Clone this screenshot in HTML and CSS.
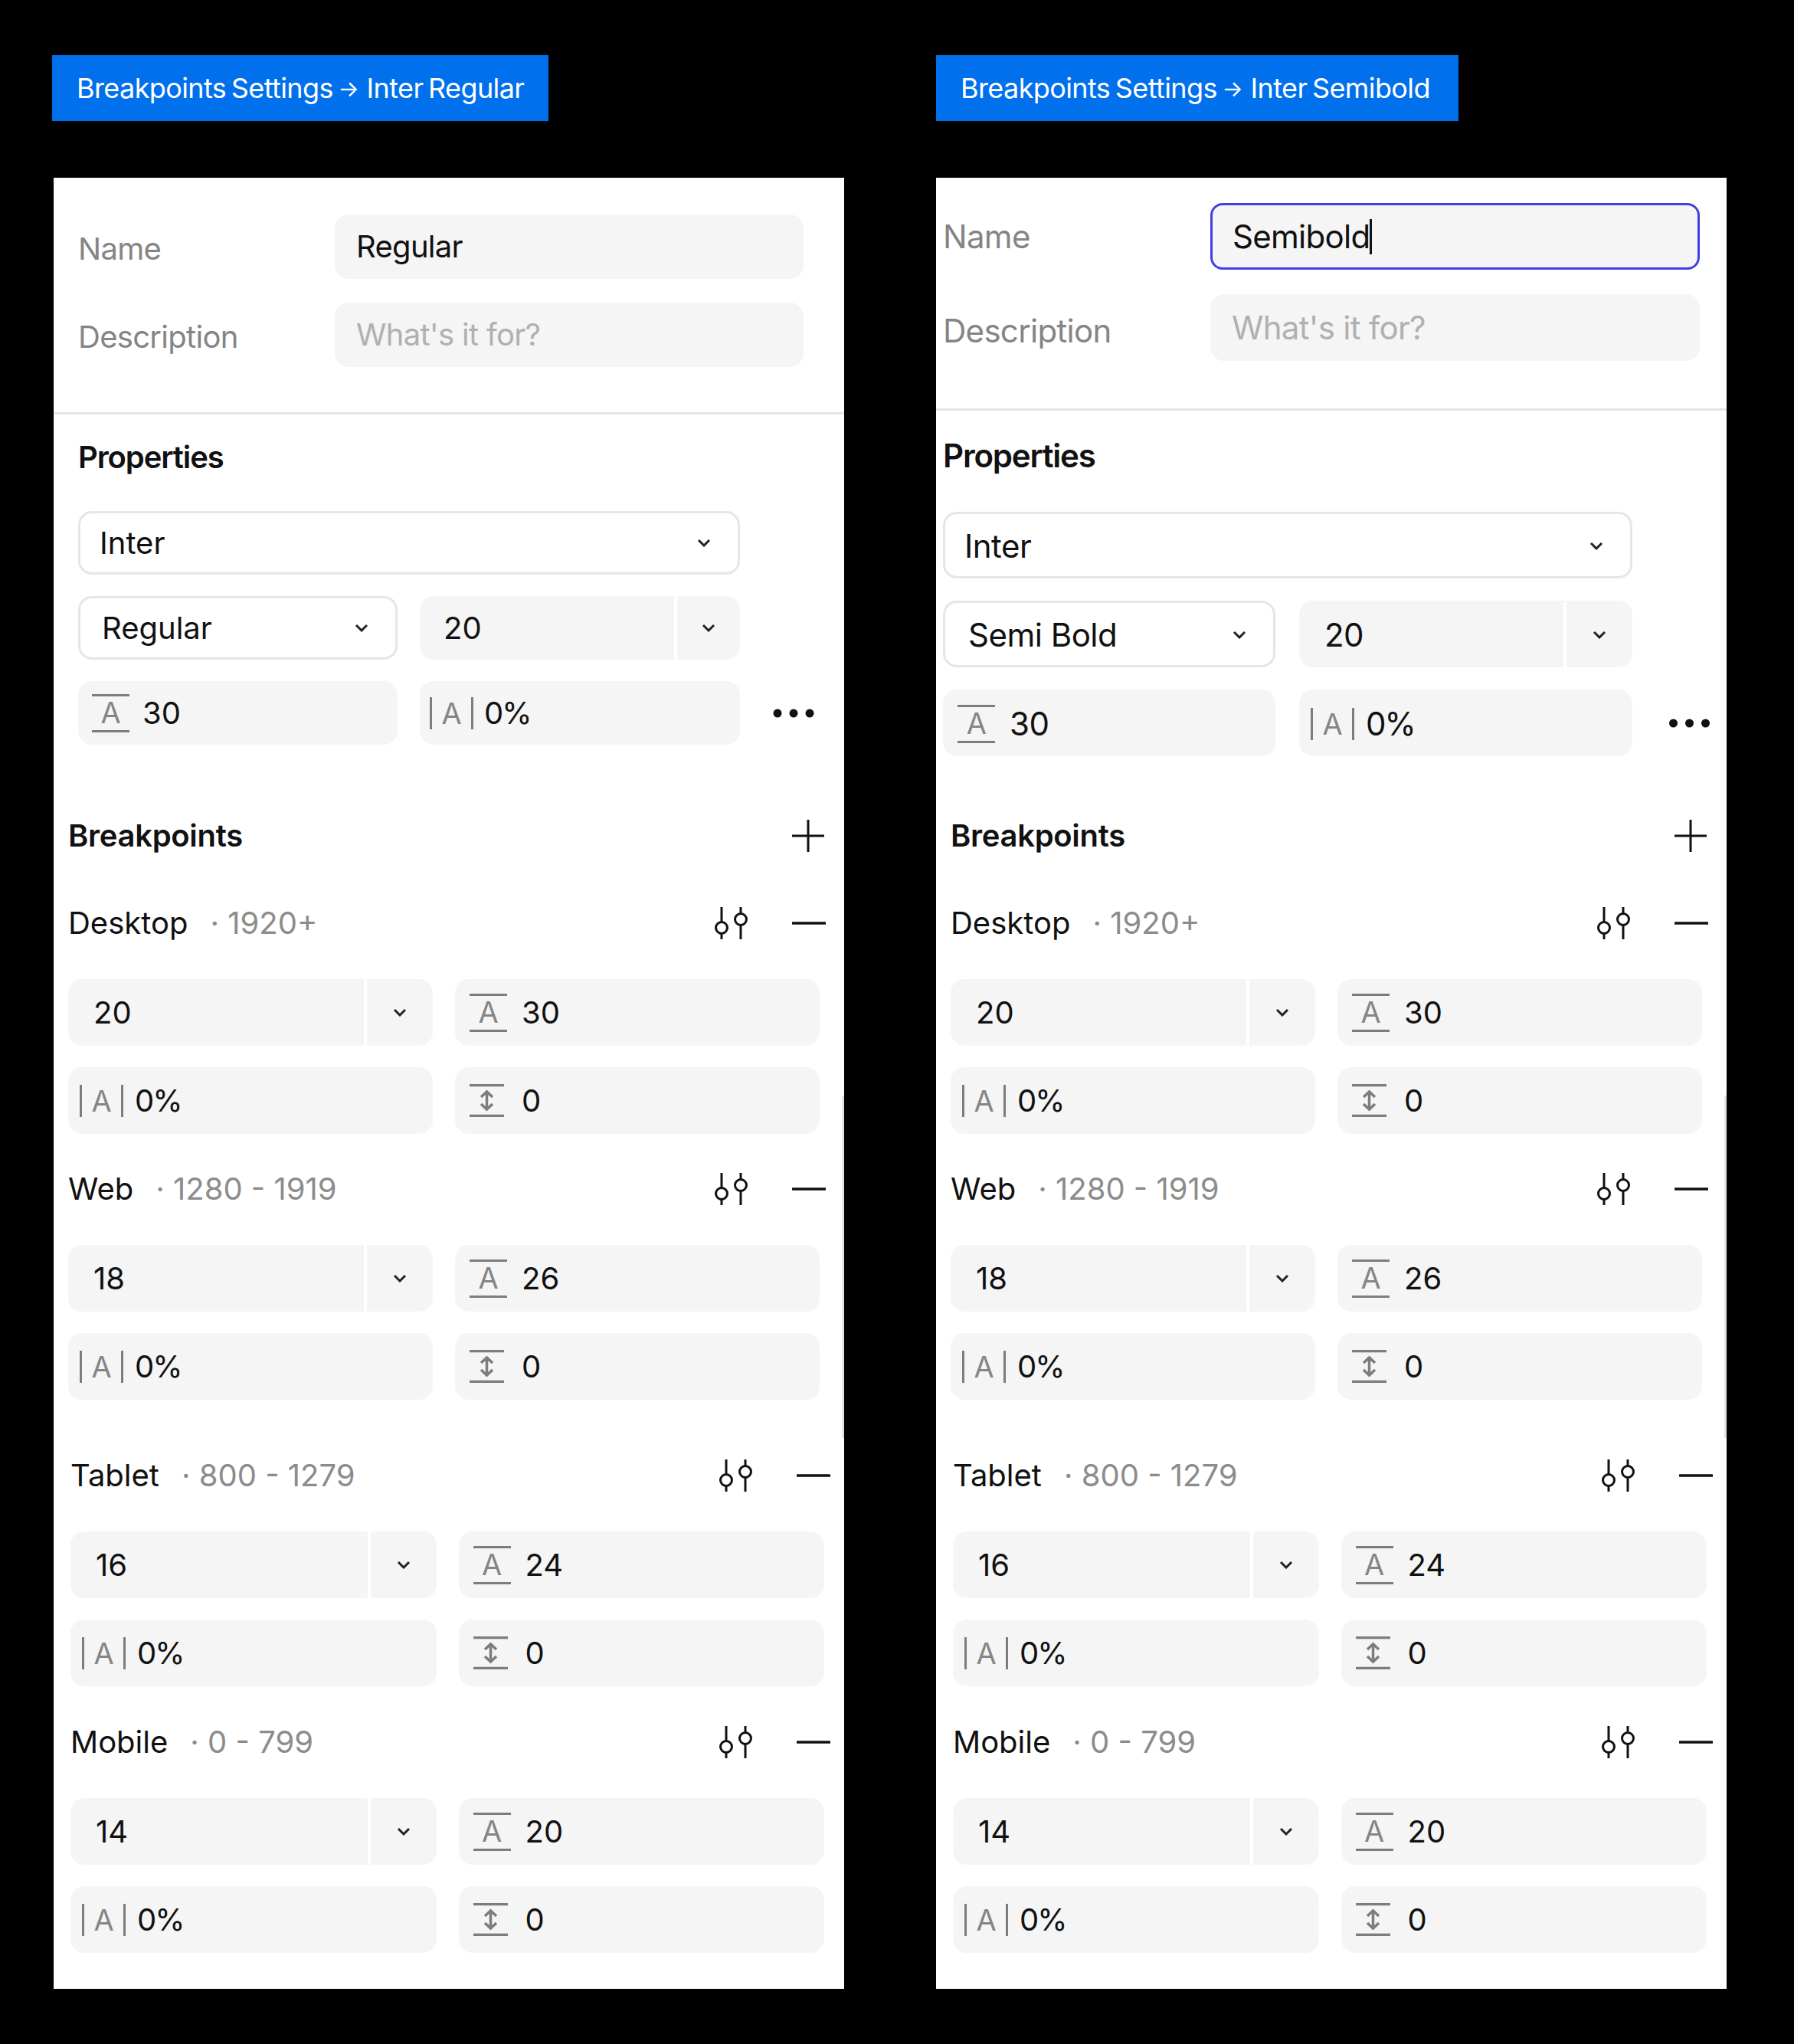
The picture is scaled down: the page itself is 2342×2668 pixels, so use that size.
FILE: index.html
```html
<!DOCTYPE html>
<html>
<head>
    <link rel="stylesheet" href="styles.css">
</head>
<body>
    <svg class="defs">
        <symbol id="chev" viewBox="0 0 18 11"><path d="M2 2 9 9 16 2" fill="none" stroke="#222" stroke-width="3"/></symbol>
        <symbol id="dots" viewBox="0 0 54 12"><circle cx="6" cy="6" r="5.5"/><circle cx="27" cy="6" r="5.5"/><circle cx="48" cy="6" r="5.5"/></symbol>
        <symbol id="plus" viewBox="0 0 42 42"><path d="M21 0V42M0 21H42" stroke="#111" stroke-width="3"/></symbol>
        <symbol id="minus" viewBox="0 0 44 6"><path d="M1 3H43" stroke="#111" stroke-width="3.5" stroke-linecap="round"/></symbol>
        <symbol id="sliders" viewBox="0 0 44 42">
            <path d="M9 0V42M34 0V42" stroke="#111" stroke-width="3"/>
            <circle cx="9" cy="27" r="7.5" fill="#fff" stroke="#111" stroke-width="3"/>
            <circle cx="34" cy="16" r="7.5" fill="#fff" stroke="#111" stroke-width="3"/>
        </symbol>
        <symbol id="spacing" viewBox="0 0 45 43">
            <path d="M0 1.5H45M0 41.5H45" stroke="#7d7d7d" stroke-width="3.5" fill="none"/>
            <path d="M22.5 11V32M15 17 22.5 10 30 17M15 26 22.5 33 30 26" stroke="#7d7d7d" stroke-width="3.5" fill="none"/>
        </symbol>
    </svg>

    <div class="board">
        <div class="column">
            <div class="tag tag-a">Breakpoints Settings <span class="arrow">→</span> Inter Regular</div>
            <div class="panel">
                <div class="scroll-thumb"></div>
                <div class="name-form form-a">
                    <div class="form-label">Name</div>
                    <div class="input">Regular</div>
                    <div class="form-label">Description</div>
                    <div class="input placeholder">What's it for?</div>
                </div>
                <div class="props props-a">
                    <div class="props-title">Properties</div>
                    <div class="props-grid">
                        <div class="select wide"><span>Inter</span><svg class="chev"><use href="#chev"/></svg></div>
                        <div class="select"><span>Regular</span><svg class="chev"><use href="#chev"/></svg></div>
                        <div class="field"><span class="num">20</span><span class="drop"><svg class="chev"><use href="#chev"/></svg></span></div>
                        <div class="field with-lh"><span class="ic-lh">A</span>30</div>
                        <div class="field with-track"><span class="ic-track">A</span>0%</div>
                        <svg class="more"><use href="#dots"/></svg>
                    </div>
                </div>
                <div class="bp">
                    <div class="bp-title"><span>Breakpoints</span><svg class="plus"><use href="#plus"/></svg></div>

                    <div class="bp-group">
                        <div class="bp-row"><span>Desktop</span><span class="range">· 1920+</span><svg class="sliders"><use href="#sliders"/></svg><svg class="minus"><use href="#minus"/></svg></div>
                        <div class="bp-fields">
                            <div class="field"><span class="num">20</span><span class="drop"><svg class="chev"><use href="#chev"/></svg></span></div>
                            <div class="field with-lh"><span class="ic-lh">A</span>30</div>
                            <div class="field with-track"><span class="ic-track">A</span>0%</div>
                            <div class="field with-sp"><svg class="ic-sp"><use href="#spacing"/></svg>0</div>
                        </div>
                    </div>

                    <div class="bp-group">
                        <div class="bp-row"><span>Web</span><span class="range">· 1280 - 1919</span><svg class="sliders"><use href="#sliders"/></svg><svg class="minus"><use href="#minus"/></svg></div>
                        <div class="bp-fields">
                            <div class="field"><span class="num">18</span><span class="drop"><svg class="chev"><use href="#chev"/></svg></span></div>
                            <div class="field with-lh"><span class="ic-lh">A</span>26</div>
                            <div class="field with-track"><span class="ic-track">A</span>0%</div>
                            <div class="field with-sp"><svg class="ic-sp"><use href="#spacing"/></svg>0</div>
                        </div>
                    </div>

                    <div class="bp-group shifted">
                        <div class="bp-row"><span>Tablet</span><span class="range">· 800 - 1279</span><svg class="sliders"><use href="#sliders"/></svg><svg class="minus"><use href="#minus"/></svg></div>
                        <div class="bp-fields">
                            <div class="field"><span class="num">16</span><span class="drop"><svg class="chev"><use href="#chev"/></svg></span></div>
                            <div class="field with-lh"><span class="ic-lh">A</span>24</div>
                            <div class="field with-track"><span class="ic-track">A</span>0%</div>
                            <div class="field with-sp"><svg class="ic-sp"><use href="#spacing"/></svg>0</div>
                        </div>
                    </div>

                    <div class="bp-group shifted">
                        <div class="bp-row"><span>Mobile</span><span class="range">· 0 - 799</span><svg class="sliders"><use href="#sliders"/></svg><svg class="minus"><use href="#minus"/></svg></div>
                        <div class="bp-fields">
                            <div class="field"><span class="num">14</span><span class="drop"><svg class="chev"><use href="#chev"/></svg></span></div>
                            <div class="field with-lh"><span class="ic-lh">A</span>20</div>
                            <div class="field with-track"><span class="ic-track">A</span>0%</div>
                            <div class="field with-sp"><svg class="ic-sp"><use href="#spacing"/></svg>0</div>
                        </div>
                    </div>
                </div>
            </div>
        </div>

        <div class="column">
            <div class="tag tag-b">Breakpoints Settings <span class="arrow">→</span> Inter Semibold</div>
            <div class="panel">
                <div class="scroll-thumb"></div>
                <div class="name-form form-b">
                    <div class="form-label">Name</div>
                    <div class="input focused">Semibold<span class="caret"></span></div>
                    <div class="form-label">Description</div>
                    <div class="input placeholder">What's it for?</div>
                </div>
                <div class="props props-b">
                    <div class="props-title">Properties</div>
                    <div class="props-grid">
                        <div class="select wide"><span>Inter</span><svg class="chev"><use href="#chev"/></svg></div>
                        <div class="select"><span>Semi Bold</span><svg class="chev"><use href="#chev"/></svg></div>
                        <div class="field"><span class="num">20</span><span class="drop"><svg class="chev"><use href="#chev"/></svg></span></div>
                        <div class="field with-lh"><span class="ic-lh">A</span>30</div>
                        <div class="field with-track"><span class="ic-track">A</span>0%</div>
                        <svg class="more"><use href="#dots"/></svg>
                    </div>
                </div>
                <div class="bp">
                    <div class="bp-title"><span>Breakpoints</span><svg class="plus"><use href="#plus"/></svg></div>

                    <div class="bp-group">
                        <div class="bp-row"><span>Desktop</span><span class="range">· 1920+</span><svg class="sliders"><use href="#sliders"/></svg><svg class="minus"><use href="#minus"/></svg></div>
                        <div class="bp-fields">
                            <div class="field"><span class="num">20</span><span class="drop"><svg class="chev"><use href="#chev"/></svg></span></div>
                            <div class="field with-lh"><span class="ic-lh">A</span>30</div>
                            <div class="field with-track"><span class="ic-track">A</span>0%</div>
                            <div class="field with-sp"><svg class="ic-sp"><use href="#spacing"/></svg>0</div>
                        </div>
                    </div>

                    <div class="bp-group">
                        <div class="bp-row"><span>Web</span><span class="range">· 1280 - 1919</span><svg class="sliders"><use href="#sliders"/></svg><svg class="minus"><use href="#minus"/></svg></div>
                        <div class="bp-fields">
                            <div class="field"><span class="num">18</span><span class="drop"><svg class="chev"><use href="#chev"/></svg></span></div>
                            <div class="field with-lh"><span class="ic-lh">A</span>26</div>
                            <div class="field with-track"><span class="ic-track">A</span>0%</div>
                            <div class="field with-sp"><svg class="ic-sp"><use href="#spacing"/></svg>0</div>
                        </div>
                    </div>

                    <div class="bp-group shifted">
                        <div class="bp-row"><span>Tablet</span><span class="range">· 800 - 1279</span><svg class="sliders"><use href="#sliders"/></svg><svg class="minus"><use href="#minus"/></svg></div>
                        <div class="bp-fields">
                            <div class="field"><span class="num">16</span><span class="drop"><svg class="chev"><use href="#chev"/></svg></span></div>
                            <div class="field with-lh"><span class="ic-lh">A</span>24</div>
                            <div class="field with-track"><span class="ic-track">A</span>0%</div>
                            <div class="field with-sp"><svg class="ic-sp"><use href="#spacing"/></svg>0</div>
                        </div>
                    </div>

                    <div class="bp-group shifted">
                        <div class="bp-row"><span>Mobile</span><span class="range">· 0 - 799</span><svg class="sliders"><use href="#sliders"/></svg><svg class="minus"><use href="#minus"/></svg></div>
                        <div class="bp-fields">
                            <div class="field"><span class="num">14</span><span class="drop"><svg class="chev"><use href="#chev"/></svg></span></div>
                            <div class="field with-lh"><span class="ic-lh">A</span>20</div>
                            <div class="field with-track"><span class="ic-track">A</span>0%</div>
                            <div class="field with-sp"><svg class="ic-sp"><use href="#spacing"/></svg>0</div>
                        </div>
                    </div>
                </div>
            </div>
        </div>
    </div>
</body>
</html>
```

FILE: styles.css
```css
body {
    margin: 0;
    background: #000;
    font-family: Inter, "Noto Sans", sans-serif;
    color: #111;
}
.defs {
    display: none;
}
.board {
    display: flex;
    gap: 120px;
    padding: 72px 0 72px 70px;
}
.column {
    width: 1032px;
}

/* blue caption above each panel */
.tag {
    box-sizing: border-box;
    height: 86px;
    margin-bottom: 74px;
    padding-left: 32px;
    display: flex;
    align-items: center;
    background: #0070ec;
    color: #fff;
    font-size: 36px;
    letter-spacing: -0.6px;
    word-spacing: -3px;
    white-space: pre;
}
.arrow {
    font-size: 29px;
    letter-spacing: 0;
    margin-right: 3px;
}
.tag-a {
    width: 648px;
    margin-left: -2px;
    padding-left: 32px;
}
.tag-b {
    width: 682px;
    padding-left: 32px;
}

.panel {
    position: relative;
    background: #fff;
    height: 2364px;
    font-size: 40px;
    line-height: 48px;
}
.scroll-thumb {
    position: absolute;
    right: 0;
    top: 1198px;
    width: 3px;
    height: 447px;
    background: #e4e4e4;
}

/* name + description */
.name-form {
    display: grid;
    align-items: center;
    border-bottom: 3px solid #e6e6e6;
    letter-spacing: -0.7px;
}
.form-a {
    grid-template-columns: 335px 612px;
    grid-auto-rows: 84px;
    row-gap: 31px;
    padding: 48px 0 59px 32px;
}
.form-b {
    grid-template-columns: 349px 639px;
    grid-auto-rows: 87px;
    row-gap: 32px;
    padding: 33px 0 62px 9px;
    font-size: 42px;
}
.form-label {
    color: #858585;
    padding-top: 6px;
}
.form-b .form-label {
    padding-top: 8px;
}
.form-b .form-label:first-child {
    padding-top: 0;
}
.input {
    box-sizing: border-box;
    height: 100%;
    display: flex;
    align-items: center;
    padding-left: 28px;
    background: #f5f5f5;
    border-radius: 18px;
}
.placeholder {
    color: #b0b0b0;
}
.focused {
    border: 3.5px solid #3f3fe6;
    border-radius: 16px;
    padding-left: 26px;
}
.caret {
    display: inline-block;
    width: 3px;
    height: 46px;
    margin-left: -1px;
    background: #111;
}

/* properties */
.props-title {
    font-weight: 600;
    letter-spacing: -1.1px;
}
.props-a {
    padding: 32px 0 95px 32px;
}
.props-a .props-title {
    margin-bottom: 46px;
}
.props-a .props-grid {
    grid-template-columns: 417px 418px 68px;
    grid-auto-rows: 83px;
    gap: 28px 29px;
}
.props-b {
    padding: 34px 0 79px 9px;
    font-size: 42px;
    line-height: 50px;
}
.props-b .props-title {
    margin-bottom: 48px;
    letter-spacing: -1.2px;
}
.props-b .props-grid {
    grid-template-columns: 434px 435px 72px;
    grid-auto-rows: 87px;
    gap: 29px 31px;
    letter-spacing: -0.5px;
}
.props-b .select,
.props-b .field {
    padding-top: 2px;
}
.props-grid {
    display: grid;
    align-items: stretch;
}
.props-grid .select,
.props-grid .with-lh {
    grid-column: 1;
}
.select {
    box-sizing: border-box;
    display: flex;
    align-items: center;
    justify-content: space-between;
    padding: 0 35px 0 30px;
    border: 3px solid #e6e6e6;
    border-radius: 18px;
}
.props-a .select {
    padding-left: 28px;
}
.props-grid .select.wide {
    grid-column: 1 / span 2;
    padding-left: 25px;
}
.more {
    align-self: center;
    justify-self: end;
    width: 54px;
    height: 12px;
    fill: #111;
}
.props-b .more {
    width: 57px;
}

/* grey value boxes */
.field {
    box-sizing: border-box;
    display: flex;
    align-items: center;
    background: #f5f5f5;
    border-radius: 18px;
    overflow: hidden;
}
.num {
    flex: 1;
    padding-left: 33px;
}
.props-a .num {
    padding-left: 31px;
}
.drop {
    box-sizing: border-box;
    width: 90px;
    height: 100%;
    display: flex;
    align-items: center;
    justify-content: center;
    border-left: 4px solid #fff;
}
.props-a .drop {
    width: 86px;
}
.chev {
    width: 18px;
    height: 11px;
    flex: none;
}
.with-lh {
    padding-left: 19px;
}
.with-track {
    padding-left: 15px;
    letter-spacing: -2px;
}
.with-sp {
    padding-left: 19px;
}
.ic-lh {
    box-sizing: border-box;
    width: 49px;
    height: 50px;
    margin-right: 19px;
    border-top: 3.5px solid #7d7d7d;
    border-bottom: 3.5px solid #7d7d7d;
    text-align: center;
    font-size: 38px;
    line-height: 43px;
    color: #858585;
}
.ic-track {
    box-sizing: border-box;
    width: 57px;
    height: 42px;
    margin-right: 15px;
    border-left: 3.5px solid #7d7d7d;
    border-right: 3.5px solid #7d7d7d;
    text-align: center;
    font-size: 38px;
    line-height: 42px;
    letter-spacing: 0;
    color: #858585;
}
.ic-sp {
    width: 45px;
    height: 43px;
    margin-right: 23px;
    flex: none;
}
.props-a .with-lh {
    padding-left: 18px;
}
.props-a .with-lh .ic-lh {
    margin-right: 17px;
}
.props-a .with-track {
    padding-left: 13px;
}
.props-a .with-track .ic-track {
    margin-right: 14px;
}

/* breakpoints list */
.bp {
    position: absolute;
    left: 19px;
    right: 32px;
    top: 835px;
}
.bp-title {
    display: flex;
    align-items: center;
    justify-content: space-between;
    margin: 0 -6px 66px 0;
    font-weight: 600;
    letter-spacing: -0.3px;
}
.plus {
    width: 42px;
    height: 42px;
}
.bp-row {
    display: flex;
    align-items: center;
    height: 48px;
    margin: 0 -7px 49px 0;
}
.range {
    margin-left: 29px;
    color: #8c8c8c;
}
.sliders {
    width: 44px;
    height: 42px;
    margin-left: auto;
}
.minus {
    width: 44px;
    height: 6px;
    margin-left: 57px;
    margin-right: -1px;
}
.bp-group {
    margin-top: 48px;
}
.bp-title + .bp-group {
    margin-top: 0;
}
.bp-group.shifted {
    margin: 75px -6px 0 3px;
}
.bp-group.shifted + .bp-group.shifted {
    margin-top: 49px;
}
.bp-fields {
    display: grid;
    grid-template-columns: 1fr 1fr;
    grid-auto-rows: 87px;
    gap: 28px 29px;
}
```
